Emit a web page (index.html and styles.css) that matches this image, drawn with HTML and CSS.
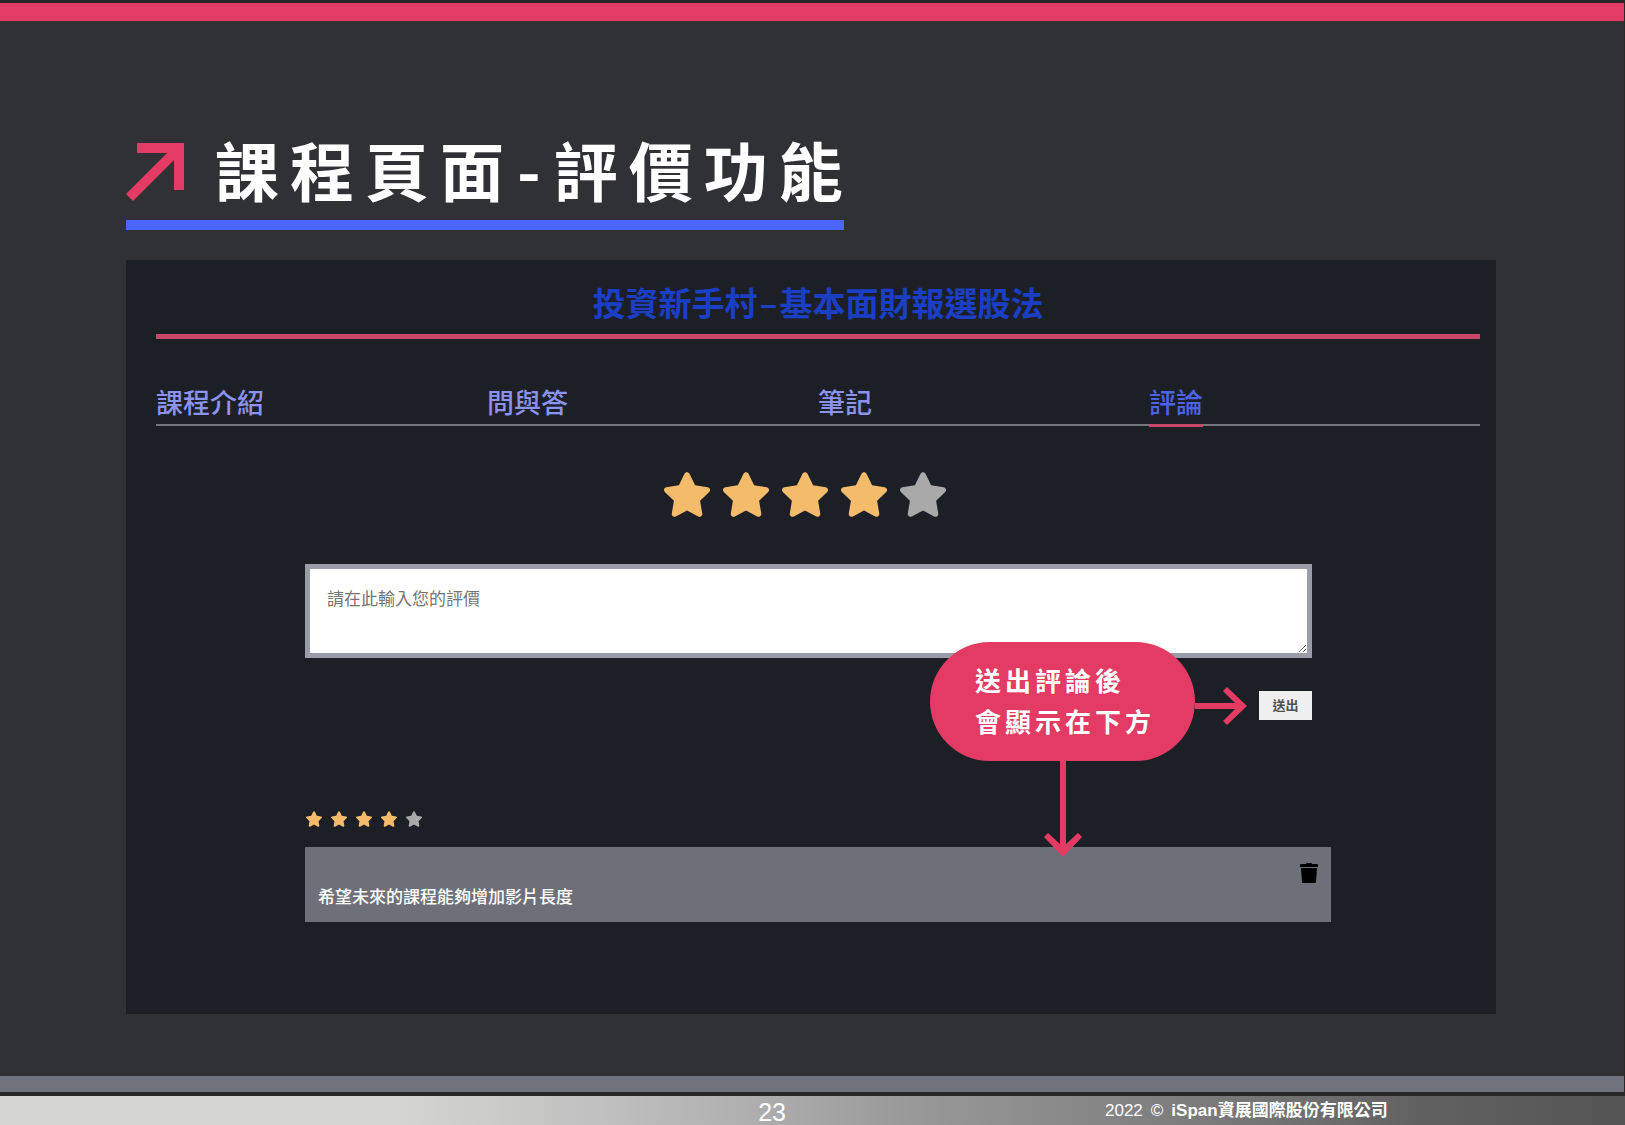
FILE: index.html
```html
<!DOCTYPE html>
<html lang="zh-Hant">
<head>
<meta charset="utf-8">
<meta name="viewport" content="width=device-width, initial-scale=1">
<title>課程頁面-評價功能</title>
<link rel="stylesheet" href="styles.css">
</head>
<body>
<svg class="defs" aria-hidden="true">
  <symbol id="star" viewBox="24 0 528 512">
    <path d="M316.9 18C311.6 7 300.4 0 288.1 0s-23.4 7-28.8 18L195 150.3 51.4 171.5c-12 1.8-22 10.2-25.7 21.7s-.7 24.2 7.9 32.7L137.8 329 113.2 474.7c-2 12 3 24.2 12.9 31.3s23 8 33.8 2.3l128.3-68.5 128.3 68.5c10.8 5.7 23.9 4.9 33.8-2.3s14.9-19.3 12.9-31.3L438.5 329 542.7 225.9c8.6-8.5 11.7-21.2 7.9-32.7s-13.7-19.9-25.7-21.7L381.2 150.3 316.9 18z"/>
  </symbol>
</svg>

<main class="slide">
  <h1 class="title">
    <svg class="title-arrow" viewBox="0 0 58 58" aria-hidden="true"><path d="M11 0H58V47H48V17L7 58 0 51 41 10H11z"/></svg>
    <span class="title-text">課程頁面<span class="dash">-</span>評價功能</span>
  </h1>

  <section class="panel">
    <h2 class="course">投資新手村<span class="dash">–</span>基本面財報選股法</h2>
    <nav class="tabs">
      <a class="tab" href="#intro">課程介紹</a>
      <a class="tab" href="#qa">問與答</a>
      <a class="tab" href="#notes">筆記</a>
      <a class="tab active" href="#reviews" aria-current="page">評論</a>
    </nav>

    <div class="reviews">
      <form class="form">
        <fieldset class="rating" aria-label="評分">
          <label class="rate"><input type="radio" name="score" value="1" aria-label="1"><svg><use href="#star"/></svg></label>
          <label class="rate"><input type="radio" name="score" value="2" aria-label="2"><svg><use href="#star"/></svg></label>
          <label class="rate"><input type="radio" name="score" value="3" aria-label="3"><svg><use href="#star"/></svg></label>
          <label class="rate"><input type="radio" name="score" value="4" aria-label="4" checked><svg><use href="#star"/></svg></label>
          <label class="rate"><input type="radio" name="score" value="5" aria-label="5"><svg><use href="#star"/></svg></label>
        </fieldset>
        <textarea class="message" placeholder="請在此輸入您的評價" aria-label="評價"></textarea>
        <button class="send" type="button">送出</button>

        <div class="callout">
          <p class="bubble">送出評論後<br>會顯示在下方</p>
          <svg class="arrow-right" viewBox="0 0 53 38" aria-hidden="true"><path d="M0 16H40L28 4 32 0 52 19 32 38 28 34 40 22H0z"/></svg>
          <svg class="arrow-down" viewBox="0 0 38 97" aria-hidden="true"><path d="M16 0H22V83L34 72 38 76 19 96 0 76 4 72 16 83z"/></svg>
        </div>
      </form>

      <article class="comment">
        <div class="score" role="img" aria-label="4 / 5">
          <svg><use href="#star"/></svg>
          <svg><use href="#star"/></svg>
          <svg><use href="#star"/></svg>
          <svg><use href="#star"/></svg>
          <svg class="off"><use href="#star"/></svg>
        </div>
        <div class="comment-body">
          <p class="comment-text">希望未來的課程能夠增加影片長度</p>
          <button class="delete" type="button" aria-label="刪除">
            <svg viewBox="0 0 18 20" aria-hidden="true"><path d="M6 1Q6 0 7 0H11Q12 0 12 1H17Q18 1 18 2V4H0V2Q0 1 1 1zM1 5H17L16 19Q16 20 15 20H3Q2 20 2 19z"/></svg>
          </button>
        </div>
      </article>
    </div>
  </section>
</main>

<footer class="footer">
  <span class="page">23</span>
  <p class="legal"><span>2022</span><span>©</span><b>iSpan資展國際股份有限公司</b></p>
</footer>
</body>
</html>
```

FILE: styles.css
```css
:root {
  --ink: #282828;
  --pink: #e33b64;
  --slate: #6e727b;
  --gold: #f4bb6b;
  --grey: #a9a9a9;
}

* {
  box-sizing: border-box;
}

body {
  display: flex;
  flex-direction: column;
  min-height: 100vh;
  margin: 0;
  padding-top: 3px;
  background: var(--ink);
  font-family: "Liberation Sans", "Noto Sans CJK TC", sans-serif;
}

h1, h2, p {
  margin: 0;
}

svg {
  display: block;
}

.defs {
  position: absolute;
  width: 0;
  height: 0;
}

.slide {
  flex: 1;
  display: flex;
  flex-direction: column;
  align-items: flex-start;
  gap: 30px;
  margin-right: 1px;
  padding: 103px 128px 62px 126px;
  border-top: 18px solid var(--pink);
  border-bottom: 16px solid var(--slate);
  background: #303135;
  font-family: "Noto Sans CJK TC", sans-serif;
}

.title {
  display: flex;
  align-items: flex-end;
  gap: 31px;
  border-bottom: 10px solid #4a66ff;
  color: #fff;
  font-size: 64px;
  font-weight: 700;
  line-height: 88px;
}

.title-arrow {
  width: 58px;
  height: 58px;
  margin-bottom: 19px;
  fill: var(--pink);
}

.title-text {
  margin-right: -10px;
  padding-bottom: 8px;
  letter-spacing: 11px;
}

.dash {
  padding: 0 2px;
}

.panel {
  flex: 1;
  align-self: stretch;
  padding: 10px 16px 40px 30px;
  background: #1d1f27;
}

.course {
  border-bottom: 5px solid #ca4866;
  color: #1a3fc4;
  font-size: 33px;
  font-weight: 700;
  line-height: 64px;
  text-align: center;
}

.tabs {
  display: grid;
  grid-template-columns: repeat(4, 1fr);
  justify-items: start;
  margin-top: 40px;
  border-bottom: 2px solid #75767c;
}

.tab {
  color: #8b93ee;
  font-size: 27px;
  font-weight: 500;
  line-height: 45px;
  text-decoration: none;
}

.tab.active {
  margin-bottom: -3px;
  border-bottom: 3px solid #ca4866;
  color: #4d63e6;
}

.reviews {
  padding: 46px 149px 0;
}

.form {
  position: relative;
  display: flex;
  flex-direction: column;
  margin-right: 19px;
}

.rating {
  display: flex;
  justify-content: center;
  gap: 13px;
  margin: 0 0 47px;
  padding: 0 7px 0 0;
  border: 0;
}

.rate {
  position: relative;
  fill: var(--grey);
  cursor: pointer;
}

.rate:has(input:checked),
.rate:has(~ .rate input:checked) {
  fill: var(--gold);
}

.rate input {
  position: absolute;
  inset: 0;
  margin: 0;
  opacity: 0;
}

.rate svg {
  width: 46px;
  height: 45px;
}

.message {
  height: 94px;
  padding: 16px 17px;
  border: 5px solid #9a9ca8;
  border-radius: 0;
  background: #fff;
  color: #222;
  font-family: inherit;
  font-size: 17px;
  line-height: 25px;
  resize: both;
}

.message::placeholder {
  color: #757575;
}

.send {
  align-self: flex-end;
  width: 53px;
  height: 29px;
  margin-top: 33px;
  padding: 0 0 3px;
  border: 0;
  background: #efefef;
  color: #505050;
  font-family: inherit;
  font-size: 13px;
  font-weight: 700;
}

.callout {
  position: absolute;
  right: 117px;
  bottom: -41px;
}

.bubble {
  width: 265px;
  padding: 17px 0 20px 45px;
  border-radius: 60px;
  background: var(--pink);
  color: #fff;
  font-size: 26px;
  font-weight: 700;
  letter-spacing: 4px;
  line-height: 41px;
  white-space: nowrap;
}

.arrow-right,
.arrow-down {
  position: absolute;
  fill: var(--pink);
}

.arrow-right {
  top: 45px;
  left: 100%;
  width: 53px;
  height: 38px;
}

.arrow-down {
  top: 100%;
  left: 114px;
  width: 38px;
  height: 97px;
}

.comment {
  margin-top: 91px;
}

.score {
  display: flex;
  gap: 9px;
  padding-left: 1px;
  fill: var(--gold);
}

.score svg {
  width: 16px;
  height: 16px;
}

.score .off {
  fill: var(--grey);
}

.comment-body {
  display: flex;
  justify-content: space-between;
  align-items: flex-start;
  margin-top: 20px;
  padding: 16px 13px 13px;
  background: #6e7079;
}

.comment-text {
  padding-top: 20px;
  color: #fff;
  font-size: 17px;
  font-weight: 500;
  line-height: 26px;
}

.delete {
  padding: 0;
  border: 0;
  background: none;
}

.delete svg {
  width: 18px;
  height: 20px;
}

.footer {
  display: grid;
  grid-template-columns: 68% 1fr;
  align-items: center;
  height: 33px;
  border-top: 4px solid var(--ink);
  background: linear-gradient(90deg, #d6d7d3 0%, #d5d5d2 24%, #c0c0c0 37%, #adadad 47%, #999 56%, #8a8a8a 65%, #747474 78%, #626262 87%, #545454 100%);
  color: #fff;
}

.page {
  padding: 3px 319px 0 0;
  font-size: 25px;
  line-height: 26px;
  text-align: right;
}

.legal {
  display: flex;
  gap: 8px;
  font-size: 17px;
  line-height: 29px;
}
```
